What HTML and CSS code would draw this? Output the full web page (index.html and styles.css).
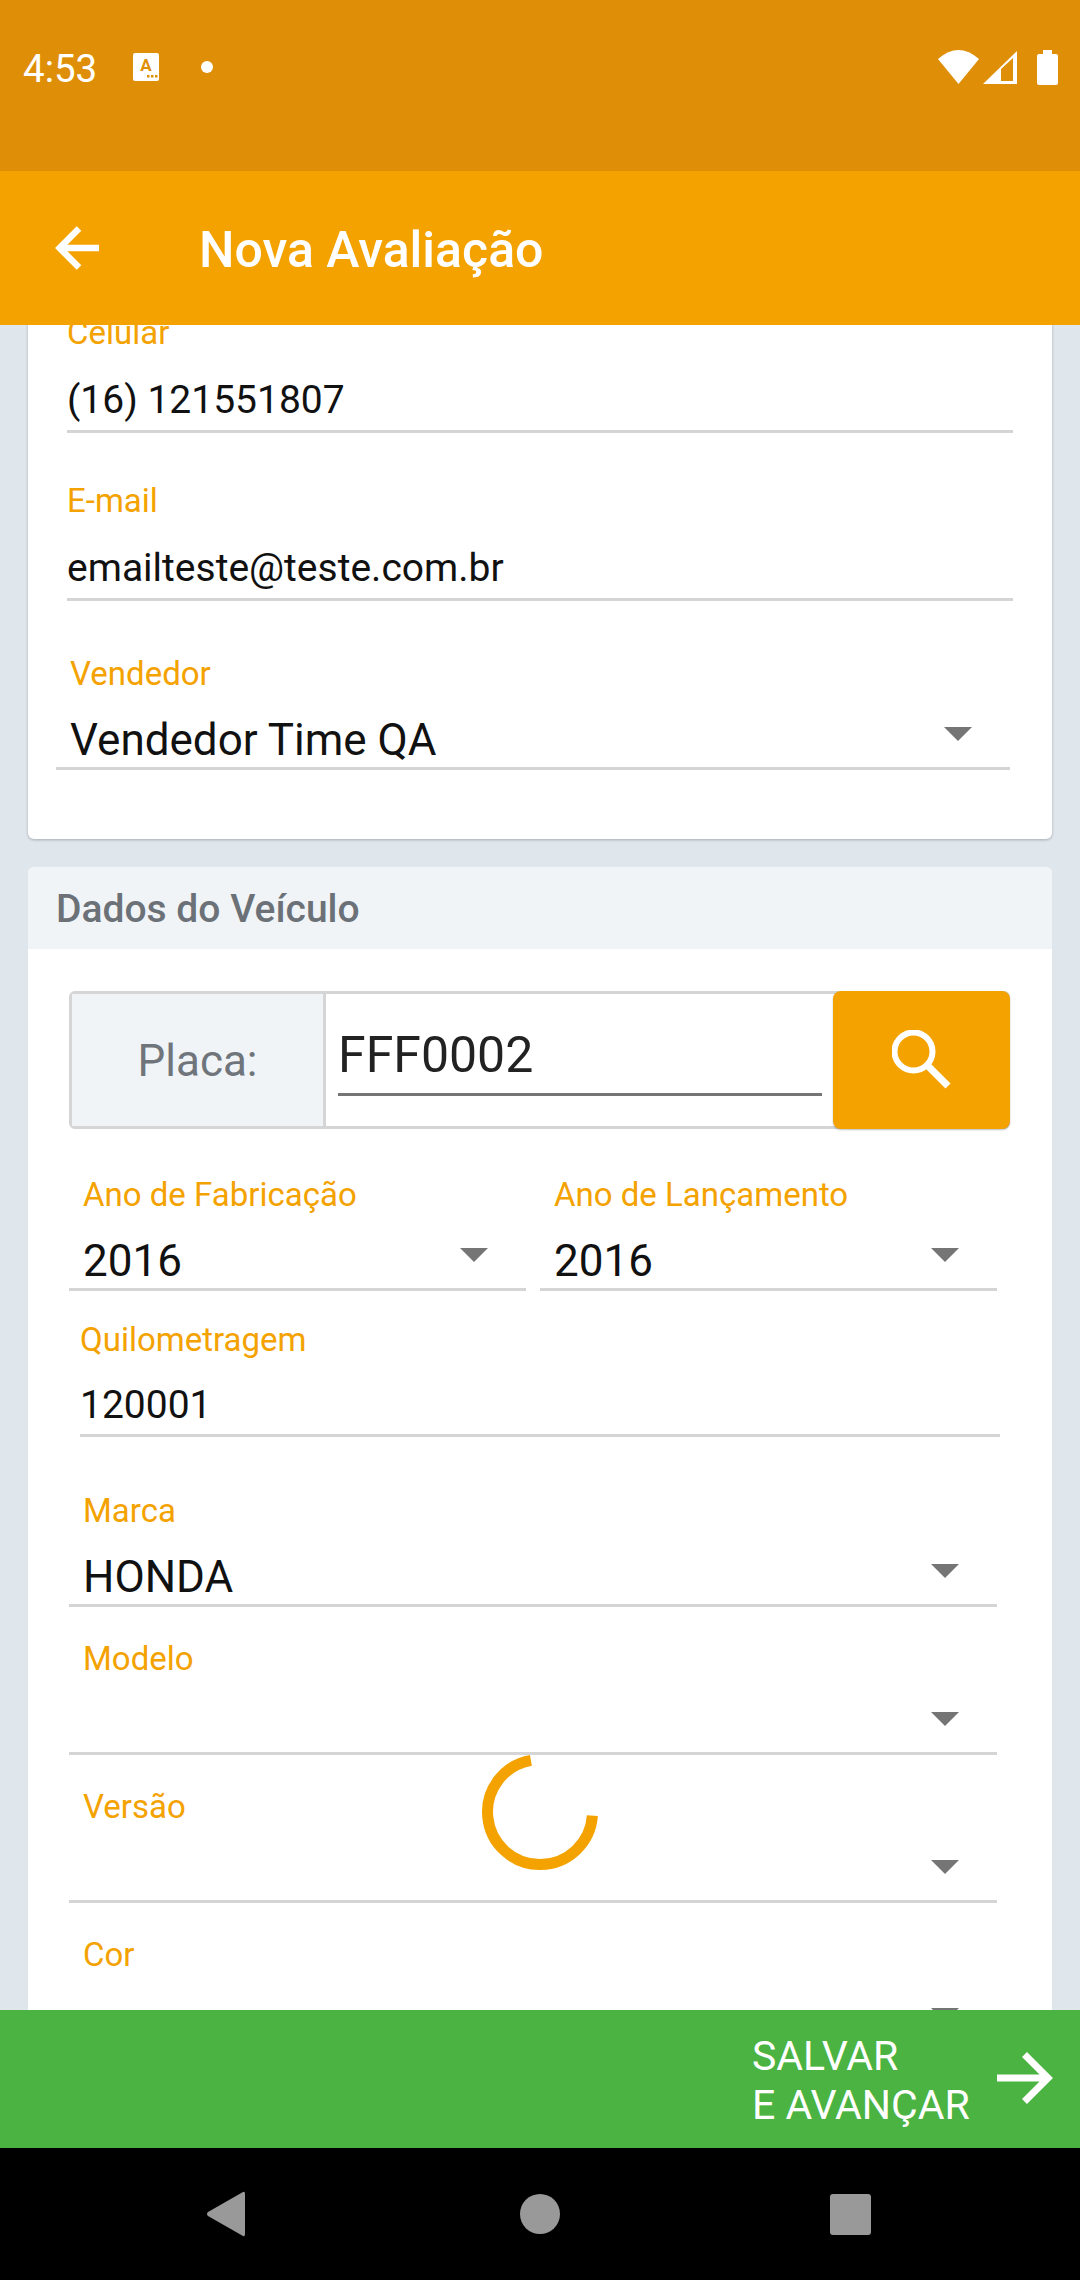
FILE: index.html
```html
<!DOCTYPE html>
<html lang="pt-BR">
<head>
  <meta charset="UTF-8" />
  <meta name="viewport" content="width=device-width, initial-scale=1.0"/>
  <title>Nova Avaliação</title>
  <link rel="stylesheet" href="styles.css">
</head>
<body>

<div class="app">

  <div class="status-bar">
    <span class="status-time">4:53</span>
    <svg class="status-a" width="26" height="28" viewBox="0 0 26 28">
      <rect width="26" height="28" rx="2" fill="#fff"/>
      <text x="13" y="18" text-anchor="middle" font-family="Roboto" font-weight="700" font-size="17" fill="#df8f07">A</text>
      <rect x="14" y="22" width="2.5" height="2.5" fill="#df8f07"/>
      <rect x="18" y="22" width="2.5" height="2.5" fill="#df8f07"/>
      <rect x="22" y="22" width="2.5" height="2.5" fill="#df8f07"/>
    </svg>
    <span class="status-dot"></span>
    <svg class="status-wifi" width="41" height="34" viewBox="0 0 41 34">
      <path d="M0 9 Q20.5 -9 41 9 L20.5 34Z" fill="#fff"/>
    </svg>
    <svg class="status-signal" width="34" height="33" viewBox="0 0 34 33">
      <path fill-rule="evenodd" d="M0 33 L34 0 V33Z M18 30 V18 L30 7 V30Z" fill="#fff"/>
    </svg>
    <svg class="status-battery" width="21" height="35" viewBox="0 0 21 35">
      <path d="M6 0 H15 V4 H19 Q21 4 21 6 V33 Q21 35 19 35 H2 Q0 35 0 33 V6 Q0 4 2 4 H6Z" fill="#fff"/>
    </svg>
  </div>

  <div class="app-bar">
    <svg class="back-icon" width="46" height="44" viewBox="0 0 46 44">
      <path d="M45 22 H7 M25 2.5 L5.6 22 L25 41.5" fill="none" stroke="#fff" stroke-width="6.5"/>
    </svg>
    <h1>Nova Avaliação</h1>
  </div>

  <div class="content">
    <div class="card card-first">
      <div class="field field-celular">
        <div class="field-label">Celular</div>
        <div class="field-value">(16) 121551807</div>
      </div>
      <div class="field field-email">
        <div class="field-label">E-mail</div>
        <div class="field-value">emailteste@teste.com.br</div>
      </div>
      <div class="select select-vendedor">
        <div class="field-label">Vendedor</div>
        <div class="select-row">
          <span>Vendedor Time QA</span>
          <i class="caret"></i>
        </div>
      </div>
    </div>

    <div class="card card-veiculo">
      <div class="card-header">Dados do Veículo</div>

      <div class="plate">
        <div class="plate-label">Placa:</div>
        <div class="plate-input">FFF0002</div>
        <button class="plate-button">
          <svg width="60" height="60" viewBox="0 0 60 60">
            <circle cx="21.5" cy="21.5" r="19" fill="none" stroke="#fff" stroke-width="6"/>
            <path d="M36 36 L56 56" stroke="#fff" stroke-width="7" fill="none"/>
          </svg>
        </button>
      </div>

      <div class="year-row">
        <div class="select">
          <div class="field-label">Ano de Fabricação</div>
          <div class="select-row">
            <span>2016</span>
            <i class="caret"></i>
          </div>
        </div>
        <div class="select">
          <div class="field-label">Ano de Lançamento</div>
          <div class="select-row">
            <span>2016</span>
            <i class="caret"></i>
          </div>
        </div>
      </div>

      <div class="field field-km">
        <div class="field-label">Quilometragem</div>
        <div class="field-value">120001</div>
      </div>

      <div class="select select-wide select-marca">
        <div class="field-label">Marca</div>
        <div class="select-row">
          <span>HONDA</span>
          <i class="caret"></i>
        </div>
      </div>
      <div class="select select-wide">
        <div class="field-label">Modelo</div>
        <div class="select-row">
          <span></span>
          <i class="caret"></i>
        </div>
      </div>
      <div class="select select-wide">
        <div class="field-label">Versão</div>
        <div class="select-row">
          <span></span>
          <i class="caret"></i>
        </div>
      </div>
      <div class="select select-wide">
        <div class="field-label">Cor</div>
        <div class="select-row">
          <span></span>
          <i class="caret"></i>
        </div>
      </div>
    </div>
  </div>

  <div class="save-bar">
    <div class="save-text">SALVAR<br>E AVANÇAR</div>
    <svg width="56" height="56" viewBox="0 0 56 56">
      <path d="M0 27 H49 M27.5 3.5 L51 27 L27.5 50.5" fill="none" stroke="#fff" stroke-width="7"/>
    </svg>
  </div>

  <div class="nav-bar">
    <svg class="nav-back" width="38" height="46" viewBox="0 0 38 46">
      <path d="M36 1 Q38 0 38 3 V43 Q38 46 36 45 L1 25 Q-1 23 1 21Z" fill="#999"/>
    </svg>
    <span class="nav-home"></span>
    <span class="nav-recent"></span>
  </div>

  <svg class="spinner" width="116" height="116" viewBox="0 0 116 116">
    <path d="M110.4 61.7 A52.5 52.5 0 1 1 48.9 6.3" fill="none" stroke="#f4a200" stroke-width="11"/>
  </svg>

</div>

</body>
</html>
```

FILE: styles.css
```css
* {
  box-sizing: border-box;
}

body {
  margin: 0;
  font-family: Roboto, sans-serif;
  background: #dfe6ec;
}

.app {
  position: relative;
  display: flex;
  flex-direction: column;
  width: 1080px;
  height: 2280px;
  overflow: hidden;
}

/* status bar */
.status-bar {
  display: flex;
  align-items: center;
  height: 171px;
  padding: 49px 22px 86px 23px;
  background: #df8f07;
  color: #fff;
}

.status-time {
  width: 72px;
  padding-top: 2px;
  font-size: 38.5px;
  white-space: nowrap;
}

.status-a {
  margin-left: 38px;
}

.status-dot {
  width: 12px;
  height: 12px;
  margin-left: 42px;
  border-radius: 50%;
  background: #fff;
}

.status-wifi {
  margin-left: auto;
}

.status-signal {
  margin-left: 4px;
}

.status-battery {
  margin-left: 20px;
}

/* app bar */
.app-bar {
  display: flex;
  align-items: center;
  height: 154px;
  padding-left: 54px;
  background: #f4a200;
  color: #fff;
}

.app-bar h1 {
  margin: 4px 0 0 99px;
  font-size: 50px;
  font-weight: 500;
}

/* scrolled content */
.content {
  flex: 1;
  min-height: 0;
  padding: 0 28px;
  overflow: hidden;
}

.card {
  background: #fff;
  border-radius: 6px;
}

.card-first {
  margin-top: -41px;
  padding: 29px 0 69px;
  box-shadow: 0 1px 3px rgba(0,0,0,0.25);
}

.card-veiculo {
  margin-top: 28px;
  padding-bottom: 40px;
}

.card-header {
  height: 82px;
  padding-left: 28px;
  line-height: 84px;
  font-size: 39px;
  font-weight: 500;
  color: #6b7177;
  background: #f0f4f7;
  border-radius: 6px 6px 0 0;
}

.field-label {
  height: 40px;
  line-height: 40px;
  font-size: 33px;
  color: #f4a200;
}

/* text inputs */
.field {
  margin: 0 39px;
}

.field-email {
  margin-top: 48px;
}

.field-value {
  margin-top: 21px;
  height: 59px;
  line-height: 52px;
  font-size: 39px;
  color: #111;
  border-bottom: 3px solid #d5d5d5;
}

.field-km {
  margin: 29px 52px 0;
}

.field-km .field-value {
  margin-top: 19px;
  height: 58px;
}

/* selects */
.select-vendedor {
  width: 954px;
  margin: 53px 0 0 28px;
}

.select .field-label {
  padding-left: 14px;
}

.select-row {
  display: flex;
  align-items: center;
  justify-content: space-between;
  margin-top: 21px;
  height: 55px;
  padding: 0 38px 2px 14px;
  font-size: 44px;
  color: #111;
  border-bottom: 3px solid #d5d5d5;
}

.caret {
  width: 0;
  height: 0;
  margin-bottom: 12px;
  border-left: 14px solid transparent;
  border-right: 14px solid transparent;
  border-top: 14px solid #757575;
}

.select-wide {
  margin: 32px 55px 0 41px;
}

.select-marca {
  margin-top: 54px;
}

/* placa */
.plate {
  display: flex;
  align-items: stretch;
  height: 138px;
  margin: 42px 42px 0 41px;
  border: 3px solid #d5d5d5;
  border-radius: 6px;
}

.plate-label {
  display: flex;
  align-items: center;
  justify-content: center;
  width: 254px;
  padding-top: 2px;
  font-size: 44px;
  color: #6f757b;
  background: #f0f4f7;
  border-right: 3px solid #d5d5d5;
}

.plate-input {
  flex: 1;
  height: 72px;
  margin: 30px 11px 0 12px;
  line-height: 62px;
  font-size: 50px;
  color: #222;
  border-bottom: 3px solid #757575;
}

.plate-button {
  display: flex;
  align-items: center;
  justify-content: center;
  width: 177px;
  margin: -3px -3px -3px 0;
  padding: 0;
  border: none;
  border-radius: 8px;
  background: #f4a200;
  box-shadow: 0 1px 2px rgba(0,0,0,0.25);
}

.year-row {
  display: grid;
  grid-template-columns: 457px 457px;
  gap: 14px;
  margin: 46px 0 0 41px;
}

/* bottom */
.save-bar {
  display: flex;
  align-items: center;
  justify-content: flex-end;
  height: 138px;
  padding-right: 27px;
  background: #4ab341;
  color: #fff;
}

.save-text {
  width: 245px;
  padding-top: 4px;
  line-height: 49px;
  font-size: 41px;
}

.nav-bar {
  display: flex;
  align-items: center;
  height: 132px;
  padding-left: 207px;
  background: #000;
}

.nav-home {
  width: 40px;
  height: 40px;
  margin-left: 275px;
  border-radius: 50%;
  background: #999;
}

.nav-recent {
  width: 41px;
  height: 41px;
  margin-left: 270px;
  border-radius: 3px;
  background: #999;
}

/* loading indicator over the form */
.spinner {
  position: absolute;
  left: 482px;
  top: 1754px;
}
```
